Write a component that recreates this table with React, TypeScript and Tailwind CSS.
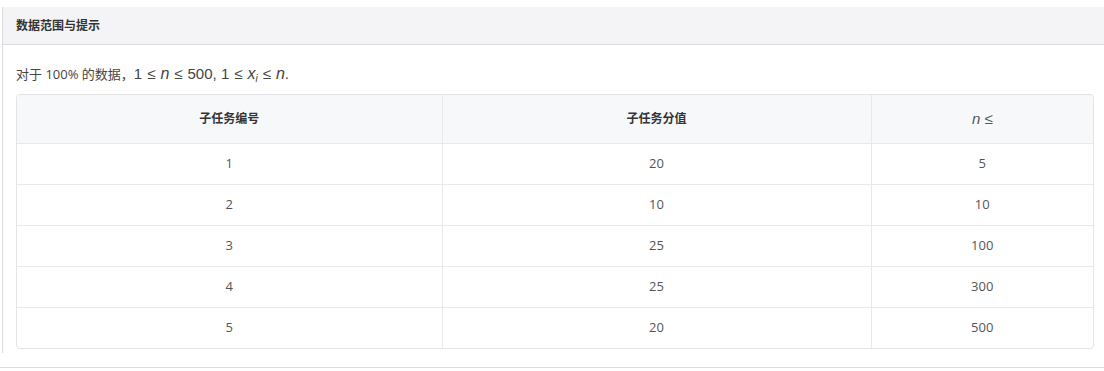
import React from 'react';

const rows = [
  { id: 1, score: 20, n: 5 },
  { id: 2, score: 10, n: 10 },
  { id: 3, score: 25, n: 100 },
  { id: 4, score: 25, n: 300 },
  { id: 5, score: 20, n: 500 },
];

const font = { fontFamily: '"Open Sans", "Noto Sans CJK SC", sans-serif' };

function M({ children }: { children: React.ReactNode }) {
  return <span className="italic font-['Liberation_Sans',sans-serif] text-[16px]">{children}</span>;
}

function T({ children }: { children: React.ReactNode }) {
  return <span className="font-['Liberation_Sans',sans-serif] text-[15px] text-[#444]">{children}</span>;
}

function Le() {
  return <span className="font-['Liberation_Sans',sans-serif] text-[15px] text-[#444] mx-[5px]">≤</span>;
}

export default function App() {
  return (
    <div className="w-[1104px] h-[371px] bg-white text-[#333]" style={font}>
      <div className="pt-[7px] pl-[2px]">
        <div className="border-l border-[#ddd] h-[346px]">
          <div className="h-[38px] bg-[#f4f4f6] border-b border-[#dcdcdc] flex items-center pl-[13px]">
            <span className="text-[12px] font-bold text-[#333]">数据范围与提示</span>
          </div>
          <div className="pl-[13px] pr-[10px]">
            <p className="mt-[19px] h-[20px] text-[13px] leading-[20px] text-[#444] whitespace-pre">
              对于 100% 的数据，<T>1</T>
              <Le />
              <M>n</M>
              <Le />
              <T>500, 1</T>
              <Le />
              <M>
                x<sub className="text-[10px]">i</sub>
              </M>
              <Le />
              <M>n</M>
              <T>.</T>
            </p>
            <div className="mt-[10px] border border-[#e3e4e7] rounded-[4px] overflow-hidden">
              <table className="w-full border-collapse text-[13px] text-[#555]">
                <thead>
                  <tr className="bg-[#f7f8fa] h-[48px]">
                    <th className="w-[425px] text-[12px] font-bold text-[#333] border-r border-[#e8e9ec]">子任务编号</th>
                    <th className="w-[429px] text-[12px] font-bold text-[#333] border-r border-[#e8e9ec]">子任务分值</th>
                    <th className="font-normal">
                      <span className="italic font-['Liberation_Sans',sans-serif] text-[15px] text-[#555]">n</span>
                      <span className="font-['Liberation_Sans',sans-serif] text-[15px] text-[#555]"> ≤</span>
                    </th>
                  </tr>
                </thead>
                <tbody>
                  {rows.map((r) => (
                    <tr key={r.id} className="h-[41px] border-t border-[#e8e9ec]">
                      <td className="text-center border-r border-[#e8e9ec]">{r.id}</td>
                      <td className="text-center border-r border-[#e8e9ec]">{r.score}</td>
                      <td className="text-center">{r.n}</td>
                    </tr>
                  ))}
                </tbody>
              </table>
            </div>
          </div>
        </div>
      </div>
      <div className="mt-[14px] border-t border-[#dcdcdc]" />
    </div>
  );
}
